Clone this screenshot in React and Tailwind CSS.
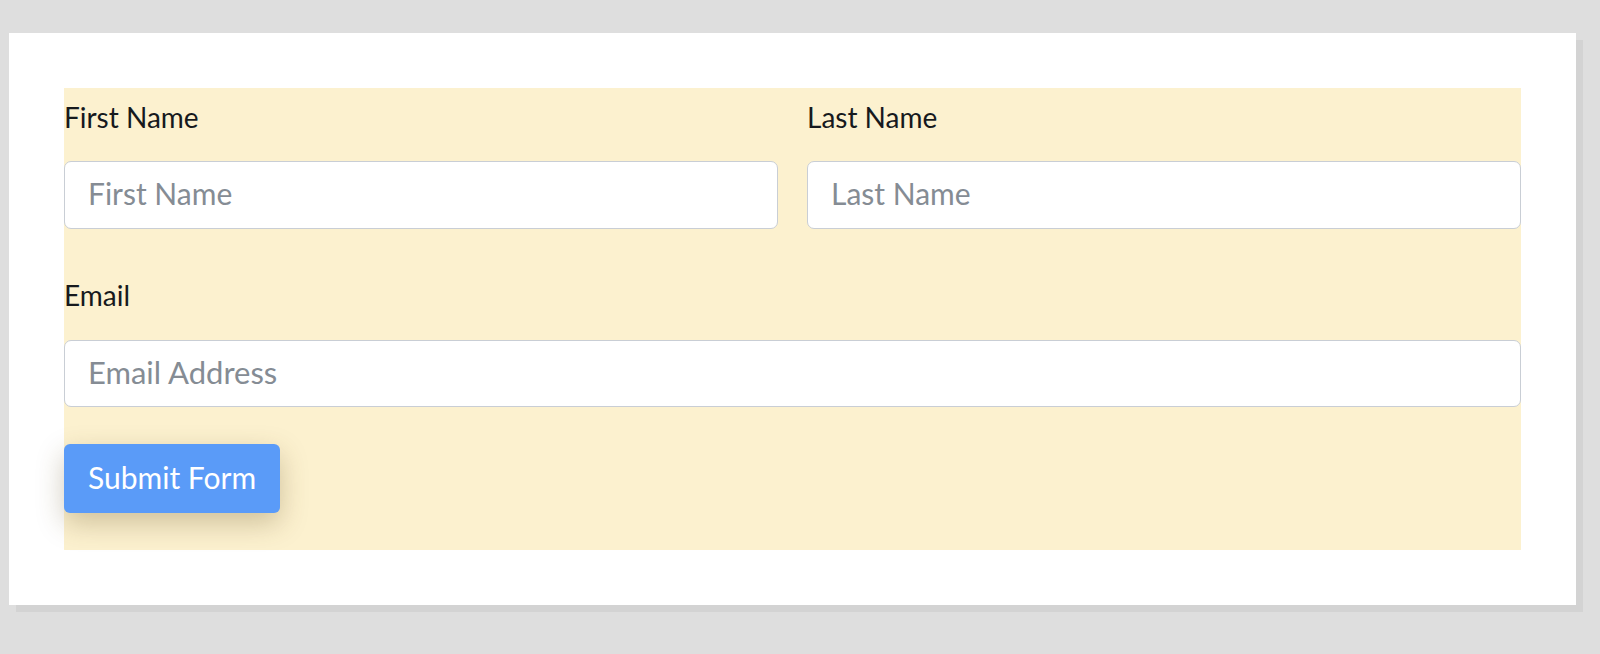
import React from "react";

export default function App() {
  return (
    <div className="min-h-[654px] w-full bg-[#dedede] pt-[33px] pl-[9px] pb-[42px]" style={{ fontFamily: "Lato, 'Noto Sans', sans-serif" }}>
      <div className="w-[1567px] h-[572px] bg-white shadow-[7px_7px_0_#d3d3d3] p-[55px]">
        <form className="bg-[#fcf1cf] h-[462px] pt-[13px] pb-[37px]" onSubmit={(e) => e.preventDefault()}>
          <div className="grid grid-cols-2 gap-x-[29px]">
            <div>
              <label className="block text-[28px] leading-8 text-[#16191d] mb-[28px]">First Name</label>
              <input
                type="text"
                placeholder="First Name"
                className="block w-full h-[68px] rounded-[7px] border-[1.5px] border-[#c9ced5] bg-white px-[23px] pb-[4px] text-[30px] text-[#333] placeholder:text-[#858c94] outline-none"
              />
            </div>
            <div>
              <label className="block text-[28px] leading-8 text-[#16191d] mb-[28px]">Last Name</label>
              <input
                type="text"
                placeholder="Last Name"
                className="block w-full h-[68px] rounded-[7px] border-[1.5px] border-[#c9ced5] bg-white px-[23px] pb-[4px] text-[30px] text-[#333] placeholder:text-[#858c94] outline-none"
              />
            </div>
          </div>
          <div className="mt-[50px]">
            <label className="block text-[28px] leading-8 text-[#16191d] mb-[29px]">Email</label>
            <input
              type="email"
              placeholder="Email Address"
              className="block w-full h-[67px] rounded-[7px] border-[1.5px] border-[#c9ced5] bg-white px-[23px] pb-[4px] text-[31px] text-[#333] placeholder:text-[#858c94] outline-none"
            />
          </div>
          <button
            type="submit"
            className="mt-[37px] h-[69px] rounded-[6px] bg-[#5a9bf8] px-6 pb-[3px] text-[30px] text-white shadow-[0_10px_28px_rgba(90,70,20,0.28)]"
          >
            Submit Form
          </button>
        </form>
      </div>
    </div>
  );
}
